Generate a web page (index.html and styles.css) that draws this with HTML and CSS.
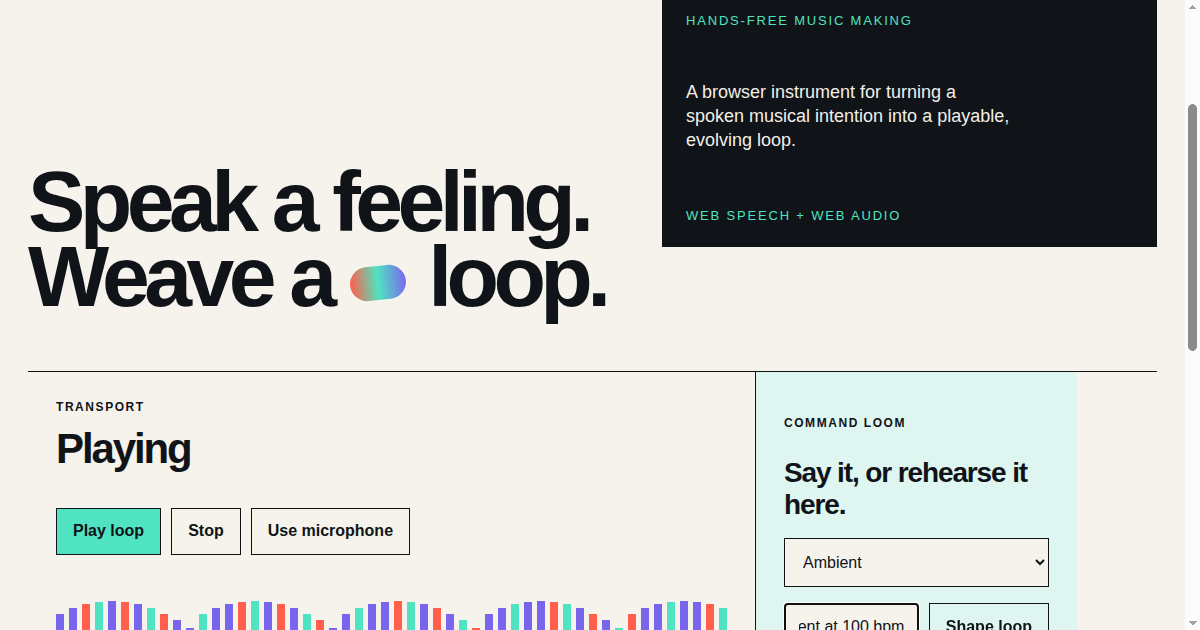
FILE: index.html
```html
<!DOCTYPE html>
<html lang="en">
<head>
<meta charset="utf-8">
<title>Loomvoice — Speak a feeling. Weave a loop.</title>
<link rel="stylesheet" href="styles.css">
</head>
<body>
<header class="site-header">
  <span class="brand">Loomvoice</span>
  <nav class="site-nav">
    <a href="#transport">Transport</a>
    <a href="#command">Command loom</a>
  </nav>
</header>
<main class="page">
  <section class="hero">
    <div class="hero-copy">
      <h1 class="headline">Speak a feeling.<br>Weave a <span class="pill" aria-hidden="true"></span> loop.</h1>
    </div>
    <aside class="intro">
      <p class="eyebrow">Hands-free music making</p>
      <p class="intro-text">A browser instrument for turning a spoken musical intention into a playable, evolving loop.</p>
      <p class="eyebrow">Web Speech + Web Audio</p>
    </aside>
  </section>

  <section class="workspace">
    <div class="transport" id="transport">
      <p class="label">Transport</p>
      <h2 class="status">Playing</h2>
      <div class="actions">
        <button class="btn btn-primary" type="button">Play loop</button>
        <button class="btn" type="button">Stop</button>
        <button class="btn" type="button">Use microphone</button>
      </div>
      <div class="bars" aria-hidden="true">
        <span class="bar bar-p" style="height:83px"></span>
        <span class="bar bar-p" style="height:89px"></span>
        <span class="bar bar-r" style="height:93px"></span>
        <span class="bar bar-t" style="height:95px"></span>
        <span class="bar bar-p" style="height:96px"></span>
        <span class="bar bar-r" style="height:95px"></span>
        <span class="bar bar-p" style="height:93px"></span>
        <span class="bar bar-t" style="height:89px"></span>
        <span class="bar bar-r" style="height:83px"></span>
        <span class="bar bar-p" style="height:77px"></span>
        <span class="bar bar-p" style="height:69px"></span>
        <span class="bar bar-t" style="height:83px"></span>
        <span class="bar bar-p" style="height:89px"></span>
        <span class="bar bar-p" style="height:93px"></span>
        <span class="bar bar-r" style="height:95px"></span>
        <span class="bar bar-t" style="height:96px"></span>
        <span class="bar bar-p" style="height:95px"></span>
        <span class="bar bar-r" style="height:93px"></span>
        <span class="bar bar-p" style="height:89px"></span>
        <span class="bar bar-t" style="height:83px"></span>
        <span class="bar bar-r" style="height:77px"></span>
        <span class="bar bar-p" style="height:69px"></span>
        <span class="bar bar-p" style="height:83px"></span>
        <span class="bar bar-t" style="height:89px"></span>
        <span class="bar bar-p" style="height:93px"></span>
        <span class="bar bar-p" style="height:95px"></span>
        <span class="bar bar-r" style="height:96px"></span>
        <span class="bar bar-t" style="height:95px"></span>
        <span class="bar bar-p" style="height:93px"></span>
        <span class="bar bar-r" style="height:89px"></span>
        <span class="bar bar-p" style="height:83px"></span>
        <span class="bar bar-t" style="height:77px"></span>
        <span class="bar bar-r" style="height:69px"></span>
        <span class="bar bar-p" style="height:83px"></span>
        <span class="bar bar-p" style="height:89px"></span>
        <span class="bar bar-t" style="height:93px"></span>
        <span class="bar bar-p" style="height:95px"></span>
        <span class="bar bar-p" style="height:96px"></span>
        <span class="bar bar-r" style="height:95px"></span>
        <span class="bar bar-t" style="height:93px"></span>
        <span class="bar bar-p" style="height:89px"></span>
        <span class="bar bar-r" style="height:83px"></span>
        <span class="bar bar-p" style="height:77px"></span>
        <span class="bar bar-t" style="height:69px"></span>
        <span class="bar bar-r" style="height:83px"></span>
        <span class="bar bar-p" style="height:89px"></span>
        <span class="bar bar-p" style="height:93px"></span>
        <span class="bar bar-t" style="height:95px"></span>
        <span class="bar bar-p" style="height:96px"></span>
        <span class="bar bar-p" style="height:95px"></span>
        <span class="bar bar-r" style="height:93px"></span>
        <span class="bar bar-t" style="height:89px"></span>
      </div>
      <dl class="readout">
        <div class="readout-item"><dt>Mood</dt><dd>Ambient</dd></div>
        <div class="readout-item"><dt>Tempo</dt><dd>100 bpm</dd></div>
        <div class="readout-item"><dt>Layers</dt><dd>4</dd></div>
      </dl>
    </div>

    <aside class="command" id="command">
      <p class="label">Command loom</p>
      <h2 class="command-title">Say it, or rehearse it here.</h2>
      <form class="command-form" onsubmit="return false">
        <select class="field select" aria-label="Mood">
          <option selected>Ambient</option>
          <option>Bright</option>
          <option>Dark</option>
          <option>Driving</option>
        </select>
        <div class="command-row">
          <input class="field input" type="text" aria-label="Command" value="Make it ambient at 100 bpm">
          <button class="btn" type="submit">Shape loop</button>
        </div>
        <p class="hint">Try “slower”, “add a pulse” or “make it brighter”.</p>
      </form>
    </aside>
  </section>
</main>
<footer class="site-footer">
  <p>Runs entirely in your browser. Nothing you say leaves this page.</p>
</footer>
<script src="script.js"></script>
</body>
</html>
```

FILE: styles.css
```css
* {
  box-sizing: border-box;
}

/* The window keeps a 15px classic scrollbar gutter on the right. */
html {
  background:
    radial-gradient(circle, #8a8a8a 4px, rgba(138, 138, 138, 0) 4.6px) right 3px top 104px / 9px 9px no-repeat fixed,
    radial-gradient(circle, #8a8a8a 4px, rgba(138, 138, 138, 0) 4.6px) right 3px top 342px / 9px 9px no-repeat fixed,
    linear-gradient(#8a8a8a, #8a8a8a) right 3px top 108px / 9px 239px no-repeat fixed,
    linear-gradient(to bottom right, rgba(250, 250, 250, 0) 50%, #a3a3a3 50%) right 7px top 5px / 4px 4px no-repeat fixed,
    linear-gradient(to bottom left, rgba(250, 250, 250, 0) 50%, #a3a3a3 50%) right 3px top 5px / 4px 4px no-repeat fixed,
    linear-gradient(to top right, rgba(250, 250, 250, 0) 50%, #a3a3a3 50%) right 7px bottom 5px / 4px 4px no-repeat fixed,
    linear-gradient(to top left, rgba(250, 250, 250, 0) 50%, #a3a3a3 50%) right 3px bottom 5px / 4px 4px no-repeat fixed,
    linear-gradient(#fbfbfb, #fbfbfb) right top / 15px 100% no-repeat fixed,
    #f5f3ec;
}

body {
  margin: 0 15px 0 0;
  background: #f5f3ec;
  color: #101318;
  font-family: "Liberation Sans", Arial, sans-serif;
}

.site-header {
  display: flex;
  justify-content: space-between;
  align-items: center;
  height: 72px;
  padding: 0 28px;
}

.brand {
  font-size: 18px;
  font-weight: 700;
  letter-spacing: -0.02em;
}

.site-nav {
  display: flex;
  gap: 24px;
  font-size: 14px;
}

.site-nav a {
  color: inherit;
  text-decoration: none;
}

.page {
  padding: 0 28px;
}

/* Hero */
.hero {
  display: grid;
  grid-template-columns: minmax(0, 634fr) minmax(0, 495fr);
  align-items: start;
  padding: 144px 0 57px;
}

.headline {
  margin: 175px 0 0;
  font-size: 86px;
  line-height: 75px;
  font-weight: 700;
  letter-spacing: -0.065em;
}

.pill {
  display: inline-block;
  width: 56px;
  height: 34px;
  margin-right: 4px;
  border-radius: 17px;
  background: linear-gradient(90deg, #ff5f4b 0%, #50e3c2 50%, #7b68ee 100%);
  vertical-align: middle;
  transform: rotate(-6deg);
}

.intro {
  display: flex;
  flex-direction: column;
  padding: 24px;
  background: #101318;
  color: #f1efe8;
}

.eyebrow {
  margin: 0;
  font-size: 13px;
  letter-spacing: 0.14em;
  text-transform: uppercase;
  color: #4fe3c1;
}

.intro-text {
  margin: 52px 0 56px;
  max-width: 328px;
  font-size: 18px;
  line-height: 24px;
}

/* Workspace */
.workspace {
  display: grid;
  grid-template-columns: minmax(0, 727fr) minmax(0, 402fr);
  min-height: 820px;
  border-top: 1px solid #101318;
}

.transport {
  padding: 28px 28px 48px;
}

.label {
  margin: 0;
  font-size: 12px;
  font-weight: 700;
  letter-spacing: 0.13em;
  text-transform: uppercase;
}

.status {
  margin: 12px 0 0;
  font-size: 42px;
  line-height: 46px;
  font-weight: 700;
  letter-spacing: -0.05em;
}

.actions {
  display: flex;
  gap: 10px;
  margin-top: 36px;
}

.btn {
  padding: 13px 16px 14px;
  border: 1px solid #101318;
  border-radius: 0;
  background: transparent;
  color: #101318;
  font: 700 16px/18px "Liberation Sans", Arial, sans-serif;
  cursor: pointer;
}

.btn-primary {
  background: #50e3c2;
}

.bars {
  display: flex;
  align-items: flex-end;
  gap: 5px;
  height: 96px;
  margin-top: 46px;
}

.bar {
  flex: 1 1 0;
}

.bar-p {
  background: #7866ec;
}

.bar-r {
  background: #ff5f4b;
}

.bar-t {
  background: #50e3c2;
}

.readout {
  display: flex;
  gap: 40px;
  margin: 32px 0 0;
}

.readout-item dt {
  font-size: 12px;
  font-weight: 700;
  letter-spacing: 0.13em;
  text-transform: uppercase;
}

.readout-item dd {
  margin: 6px 0 0;
  font-size: 20px;
}

/* Command loom */
.command {
  max-width: 322px;
  padding: 44px 28px;
  border-left: 1px solid #101318;
  background: #dff6f0;
}

.command-title {
  margin: 27px 0 17px;
  font-size: 28px;
  line-height: 32px;
  font-weight: 700;
  letter-spacing: -0.04em;
}

.field {
  border: 1px solid #101318;
  border-radius: 0;
  background: #f5f3ec;
  color: #101318;
  font: 16px "Liberation Sans", Arial, sans-serif;
}

.select {
  display: block;
  width: 100%;
  height: 49px;
  padding: 0 14px;
}

.command-row {
  display: grid;
  grid-template-columns: minmax(0, 1fr) auto;
  gap: 10px;
  margin-top: 16px;
}

.input {
  width: 100%;
  min-width: 0;
  height: 48px;
  padding: 0 14px;
}

.hint {
  margin: 16px 0 0;
  font-size: 14px;
  line-height: 20px;
}

.site-footer {
  padding: 40px 28px 54px;
  border-top: 1px solid #101318;
  font-size: 14px;
}

.site-footer p {
  margin: 0;
}
```

FILE: script.js
```js
(function () {
  var input = document.querySelector('.input');
  function settle() {
    if (input) {
      input.focus({ preventScroll: true });
      var n = input.value.length;
      input.setSelectionRange(n, n);
      input.scrollLeft = input.scrollWidth;
    }
    window.scrollTo(0, 227);
  }
  settle();
  window.addEventListener('load', settle);
})();
```
